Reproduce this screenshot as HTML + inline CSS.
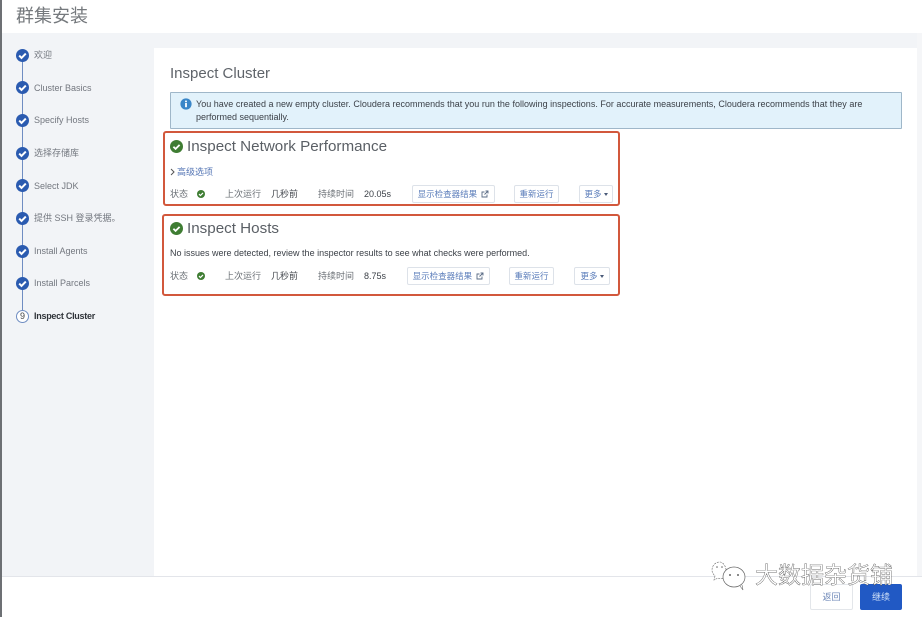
<!DOCTYPE html>
<html lang="zh">
<head>
<meta charset="utf-8">
<title>群集安装</title>
<style>
html,body{margin:0;padding:0;background:#fff}
body{width:922px;height:617px;position:relative;overflow:hidden;font-family:"Liberation Sans","Noto Sans CJK SC",sans-serif;color:#333}
#w{position:absolute;left:0;top:0;width:922px;height:617px;overflow:hidden;background:#fff;filter:blur(.3px)}
.a{position:absolute;white-space:nowrap}
.t{font-size:9px;line-height:12px}
.nav{left:34px;color:#73777f;font-size:9px;line-height:12px}
.c{position:absolute;left:16px;width:13px;height:13px}
.btn{position:absolute;box-sizing:border-box;height:18px;border:1px solid #dde2e9;border-radius:2px;background:#fff;color:#5a7cba;font-size:8.5px;line-height:16px;text-align:center;white-space:nowrap}
.box{position:absolute;box-sizing:border-box;border:2px solid #d2583c;border-radius:3px}
.caret{display:inline-block;width:0;height:0;border-left:2.5px solid transparent;border-right:2.5px solid transparent;border-top:3px solid #4a5a78;vertical-align:1px;margin-left:2px}
</style>
</head>
<body>
<div id="w">
<div class="a" style="left:0;top:33px;width:922px;height:544px;background:#f2f4f7"></div>
<div class="a" style="left:154px;top:48px;width:763px;height:528px;background:#fff"></div>
<div class="a" style="left:917px;top:33px;width:5px;height:544px;background:#f5f6f8"></div>
<div class="a" style="left:0;top:576px;width:922px;height:1px;background:#e3e5ea"></div>
<div class="a" style="left:0;top:0;width:2px;height:617px;background:#6d7074"></div>

<div class="a" style="left:16px;top:4px;font-size:18px;line-height:24px;color:#75797d">群集安装</div>

<div class="a" style="left:22px;top:55px;width:1px;height:261px;background:#6f8dc2"></div>

<svg class="c" style="top:49px" viewBox="0 0 13 13"><circle cx="6.5" cy="6.5" r="6.5" fill="#2b5bb0"/><path d="M3.2 6.6l2.3 2.3 4.3-4.3" fill="none" stroke="#fff" stroke-width="2"/></svg>
<svg class="c" style="top:81px" viewBox="0 0 13 13"><circle cx="6.5" cy="6.5" r="6.5" fill="#2b5bb0"/><path d="M3.2 6.6l2.3 2.3 4.3-4.3" fill="none" stroke="#fff" stroke-width="2"/></svg>
<svg class="c" style="top:114px" viewBox="0 0 13 13"><circle cx="6.5" cy="6.5" r="6.5" fill="#2b5bb0"/><path d="M3.2 6.6l2.3 2.3 4.3-4.3" fill="none" stroke="#fff" stroke-width="2"/></svg>
<svg class="c" style="top:147px" viewBox="0 0 13 13"><circle cx="6.5" cy="6.5" r="6.5" fill="#2b5bb0"/><path d="M3.2 6.6l2.3 2.3 4.3-4.3" fill="none" stroke="#fff" stroke-width="2"/></svg>
<svg class="c" style="top:179px" viewBox="0 0 13 13"><circle cx="6.5" cy="6.5" r="6.5" fill="#2b5bb0"/><path d="M3.2 6.6l2.3 2.3 4.3-4.3" fill="none" stroke="#fff" stroke-width="2"/></svg>
<svg class="c" style="top:212px" viewBox="0 0 13 13"><circle cx="6.5" cy="6.5" r="6.5" fill="#2b5bb0"/><path d="M3.2 6.6l2.3 2.3 4.3-4.3" fill="none" stroke="#fff" stroke-width="2"/></svg>
<svg class="c" style="top:245px" viewBox="0 0 13 13"><circle cx="6.5" cy="6.5" r="6.5" fill="#2b5bb0"/><path d="M3.2 6.6l2.3 2.3 4.3-4.3" fill="none" stroke="#fff" stroke-width="2"/></svg>
<svg class="c" style="top:277px" viewBox="0 0 13 13"><circle cx="6.5" cy="6.5" r="6.5" fill="#2b5bb0"/><path d="M3.2 6.6l2.3 2.3 4.3-4.3" fill="none" stroke="#fff" stroke-width="2"/></svg>
<div class="a" style="left:16px;top:310px;box-sizing:border-box;width:13px;height:13px;border:1px solid #6f8dc2;border-radius:50%;background:#fff;font-size:9px;line-height:11px;text-align:center;color:#444">9</div>

<div class="a nav" style="top:49px">欢迎</div>
<div class="a nav" style="top:82px">Cluster Basics</div>
<div class="a nav" style="top:114px">Specify Hosts</div>
<div class="a nav" style="top:147px">选择存储库</div>
<div class="a nav" style="top:180px">Select JDK</div>
<div class="a nav" style="top:212px">提供 SSH 登录凭据。</div>
<div class="a nav" style="top:245px">Install Agents</div>
<div class="a nav" style="top:277px">Install Parcels</div>
<div class="a nav" style="top:310px;color:#30343a;font-weight:bold;letter-spacing:-.27px">Inspect Cluster</div>

<div class="a" style="left:170px;top:65px;font-size:15px;line-height:18px;color:#5f646a">Inspect Cluster</div>

<div class="a" style="left:170px;top:92px;box-sizing:border-box;width:732px;height:37px;background:#e2f2fb;border:1px solid #9fb7c9;border-radius:1px"></div>
<svg class="a" style="left:180px;top:98px" width="12" height="12" viewBox="0 0 12 12"><circle cx="6" cy="6" r="5.6" fill="#3a86c8"/><rect x="5.1" y="5" width="1.8" height="4.2" fill="#fff"/><rect x="5.1" y="2.6" width="1.8" height="1.6" fill="#fff"/></svg>
<div class="a t" style="left:196px;top:98px;color:#3c4148;letter-spacing:.015px">You have created a new empty cluster. Cloudera recommends that you run the following inspections. For accurate measurements, Cloudera recommends that they are</div>
<div class="a t" style="left:196px;top:111px;color:#3c4148">performed sequentially.</div>

<div class="box" style="left:163px;top:131px;width:457px;height:75px"></div>
<svg class="a" style="left:170px;top:140px" width="13" height="13" viewBox="0 0 13 13"><circle cx="6.5" cy="6.5" r="6.5" fill="#3f7d33"/><path d="M3.4 6.7l2.2 2.2 4-4" fill="none" stroke="#fff" stroke-width="1.8"/></svg>
<div class="a" style="left:187px;top:138px;font-size:15.2px;line-height:18px;color:#5a5f65">Inspect Network Performance</div>
<svg class="a" style="left:170px;top:168px" width="5" height="8" viewBox="0 0 5 8"><path d="M1 1l3 3-3 3" fill="none" stroke="#555" stroke-width="1"/></svg>
<div class="a t" style="left:177px;top:166px;color:#5576b5">高级选项</div>

<div class="a t" style="left:170px;top:188px;color:#6b7076">状态</div>
<svg class="a" style="left:197px;top:190px" width="8" height="8" viewBox="0 0 8 8"><circle cx="4" cy="4" r="4" fill="#3f7d33"/><path d="M2 4.1l1.4 1.4 2.6-2.6" fill="none" stroke="#fff" stroke-width="1.2"/></svg>
<div class="a t" style="left:225px;top:188px;color:#6b7076">上次运行</div>
<div class="a t" style="left:271px;top:188px;color:#45494f">几秒前</div>
<div class="a t" style="left:318px;top:188px;color:#6b7076">持续时间</div>
<div class="a t" style="left:364px;top:188px;color:#3c4148">20.05s</div>
<div class="btn" style="left:412px;top:185px;width:83px">显示检查器结果 <svg width="8" height="8" viewBox="0 0 8 8" style="vertical-align:-1px;margin-left:2px"><path d="M6 4.5V7H1V2h2.5M4.5 1H7v2.5M7 1L3.5 4.5" fill="none" stroke="#5a6b85" stroke-width=".9"/></svg></div>
<div class="btn" style="left:514px;top:185px;width:45px">重新运行</div>
<div class="btn" style="left:579px;top:185px;width:34px">更多<span class="caret"></span></div>

<div class="box" style="left:162px;top:214px;width:458px;height:82px"></div>
<svg class="a" style="left:170px;top:222px" width="13" height="13" viewBox="0 0 13 13"><circle cx="6.5" cy="6.5" r="6.5" fill="#3f7d33"/><path d="M3.4 6.7l2.2 2.2 4-4" fill="none" stroke="#fff" stroke-width="1.8"/></svg>
<div class="a" style="left:187px;top:220px;font-size:15.2px;line-height:18px;color:#5a5f65">Inspect Hosts</div>
<div class="a t" style="left:170px;top:247px;color:#3c4148">No issues were detected, review the inspector results to see what checks were performed.</div>

<div class="a t" style="left:170px;top:270px;color:#6b7076">状态</div>
<svg class="a" style="left:197px;top:272px" width="8" height="8" viewBox="0 0 8 8"><circle cx="4" cy="4" r="4" fill="#3f7d33"/><path d="M2 4.1l1.4 1.4 2.6-2.6" fill="none" stroke="#fff" stroke-width="1.2"/></svg>
<div class="a t" style="left:225px;top:270px;color:#6b7076">上次运行</div>
<div class="a t" style="left:271px;top:270px;color:#45494f">几秒前</div>
<div class="a t" style="left:318px;top:270px;color:#6b7076">持续时间</div>
<div class="a t" style="left:364px;top:270px;color:#3c4148">8.75s</div>
<div class="btn" style="left:407px;top:267px;width:83px">显示检查器结果 <svg width="8" height="8" viewBox="0 0 8 8" style="vertical-align:-1px;margin-left:2px"><path d="M6 4.5V7H1V2h2.5M4.5 1H7v2.5M7 1L3.5 4.5" fill="none" stroke="#5a6b85" stroke-width=".9"/></svg></div>
<div class="btn" style="left:509px;top:267px;width:45px">重新运行</div>
<div class="btn" style="left:574px;top:267px;width:36px">更多<span class="caret"></span></div>

<div class="btn" style="left:810px;top:584px;width:43px;height:26px;line-height:24px;border-color:#e3e6ea;color:#6f89b8;font-size:9px">返回</div>
<div class="btn" style="left:860px;top:584px;width:42px;height:26px;line-height:24px;background:#2159c4;border-color:#2159c4;color:#cfe0f7;font-size:9px">继续</div>

<svg class="a" style="left:711px;top:559px" width="38" height="33" viewBox="0 0 38 33"><path d="M15 14C16 8 12 3 9 3 4 3 1 7 1 11c0 3 2 5 3 6l-1 4 4-2c2 1 4 1 5 0" fill="#fff" stroke="#666" stroke-width=".6" stroke-dasharray="2 1"/><ellipse cx="23" cy="18" rx="11" ry="10" fill="#fff" stroke="#666" stroke-width=".7"/><path d="M29 27l3 4-1-5" fill="#fff" stroke="#666" stroke-width=".6"/><circle cx="19" cy="16" r="1" fill="#666"/><circle cx="27" cy="16" r="1" fill="#666"/><circle cx="6" cy="8" r=".8" fill="#666"/><circle cx="11" cy="8" r=".8" fill="#666"/></svg>
<div class="a" style="left:755px;top:561px;font-size:23px;line-height:28px;color:#fff;-webkit-text-stroke:.35px #444">大数据杂货铺</div>
</div>
</body>
</html>
